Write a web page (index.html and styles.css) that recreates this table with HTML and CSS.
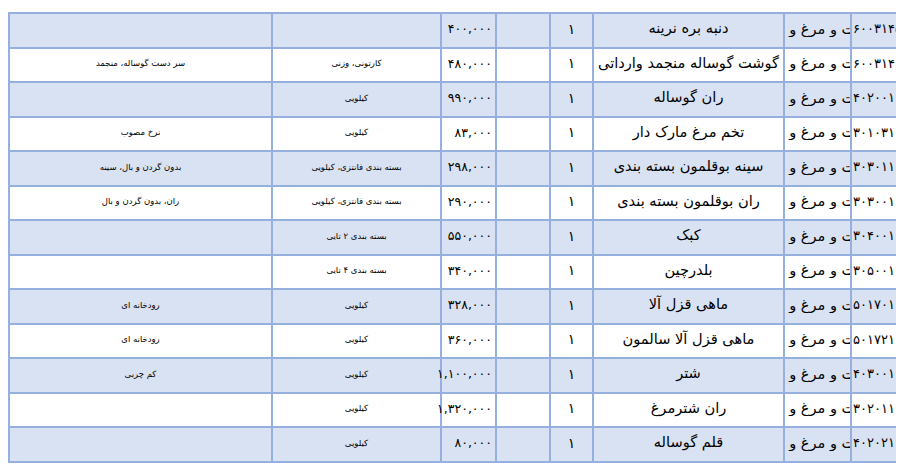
FILE: index.html
```html
<!DOCTYPE html>
<html lang="fa">
<head>
<meta charset="utf-8">
<link rel="stylesheet" href="styles.css">
</head>
<body>
<div class="wrap">
<table class="grid" dir="rtl">
<colgroup>
<col class="c-code"><col class="c-cat"><col class="c-name"><col class="c-qty"><col class="c-empty"><col class="c-price"><col class="c-pack"><col class="c-note">
</colgroup>
<tbody>
<tr class="band"><td class="code">۶۰۰۳۱۴۵</td><td class="cat"><div><span>گوشت و مرغ و ماهی</span></div></td><td class="name">دنبه بره نرینه</td><td class="qty">۱</td><td></td><td class="price">۴۰۰,۰۰۰</td><td class="small"></td><td class="small"></td></tr>
<tr><td class="code">۶۰۰۳۱۴۶</td><td class="cat"><div><span>گوشت و مرغ و ماهی</span></div></td><td class="name">گوشت گوساله منجمد وارداتی</td><td class="qty">۱</td><td></td><td class="price">۴۸۰,۰۰۰</td><td class="small">کارتونی، وزنی</td><td class="small">سر دست گوساله، منجمد</td></tr>
<tr class="band"><td class="code">۴۰۲۰۰۱</td><td class="cat"><div><span>گوشت و مرغ و ماهی</span></div></td><td class="name">ران گوساله</td><td class="qty">۱</td><td></td><td class="price">۹۹۰,۰۰۰</td><td class="small">کیلویی</td><td class="small"></td></tr>
<tr><td class="code">۳۰۱۰۳۱</td><td class="cat"><div><span>گوشت و مرغ و ماهی</span></div></td><td class="name">تخم مرغ مارک دار</td><td class="qty">۱</td><td></td><td class="price">۸۳,۰۰۰</td><td class="small">کیلویی</td><td class="small">نرخ مصوب</td></tr>
<tr class="band"><td class="code">۳۰۳۰۱۱</td><td class="cat"><div><span>گوشت و مرغ و ماهی</span></div></td><td class="name">سینه بوقلمون بسته بندی</td><td class="qty">۱</td><td></td><td class="price">۲۹۸,۰۰۰</td><td class="small">بسته بندی فانتزی، کیلویی</td><td class="small">بدون گردن و بال، سینه</td></tr>
<tr><td class="code">۳۰۳۰۰۱</td><td class="cat"><div><span>گوشت و مرغ و ماهی</span></div></td><td class="name">ران بوقلمون بسته بندی</td><td class="qty">۱</td><td></td><td class="price">۲۹۰,۰۰۰</td><td class="small">بسته بندی فانتزی، کیلویی</td><td class="small">ران، بدون گردن و بال</td></tr>
<tr class="band"><td class="code">۳۰۴۰۰۱</td><td class="cat"><div><span>گوشت و مرغ و ماهی</span></div></td><td class="name">کبک</td><td class="qty">۱</td><td></td><td class="price">۵۵۰,۰۰۰</td><td class="small">بسته بندی ۲ تایی</td><td class="small"></td></tr>
<tr><td class="code">۳۰۵۰۰۱</td><td class="cat"><div><span>گوشت و مرغ و ماهی</span></div></td><td class="name">بلدرچین</td><td class="qty">۱</td><td></td><td class="price">۳۴۰,۰۰۰</td><td class="small">بسته بندی ۴ تایی</td><td class="small"></td></tr>
<tr class="band"><td class="code">۵۰۱۷۰۱</td><td class="cat"><div><span>گوشت و مرغ و ماهی</span></div></td><td class="name">ماهی قزل آلا</td><td class="qty">۱</td><td></td><td class="price">۳۲۸,۰۰۰</td><td class="small">کیلویی</td><td class="small">رودخانه ای</td></tr>
<tr><td class="code">۵۰۱۷۲۱</td><td class="cat"><div><span>گوشت و مرغ و ماهی</span></div></td><td class="name">ماهی قزل آلا سالمون</td><td class="qty">۱</td><td></td><td class="price">۳۶۰,۰۰۰</td><td class="small">کیلویی</td><td class="small">رودخانه ای</td></tr>
<tr class="band"><td class="code">۴۰۳۰۰۱</td><td class="cat"><div><span>گوشت و مرغ و ماهی</span></div></td><td class="name">شتر</td><td class="qty">۱</td><td></td><td class="price">۱,۱۰۰,۰۰۰</td><td class="small">کیلویی</td><td class="small">کم چربی</td></tr>
<tr><td class="code">۳۰۲۰۱۱</td><td class="cat"><div><span>گوشت و مرغ و ماهی</span></div></td><td class="name">ران شترمرغ</td><td class="qty">۱</td><td></td><td class="price">۱,۳۲۰,۰۰۰</td><td class="small">کیلویی</td><td class="small"></td></tr>
<tr class="band"><td class="code">۴۰۲۰۲۱</td><td class="cat"><div><span>گوشت و مرغ و ماهی</span></div></td><td class="name">قلم گوساله</td><td class="qty">۱</td><td></td><td class="price">۸۰,۰۰۰</td><td class="small">کیلویی</td><td class="small"></td></tr>
</tbody>
</table>
</div>
</body>
</html>
```
FILE: styles.css
```css
html, body {
  margin: 0;
  padding: 0;
  background: #ffffff;
}
body {
  padding: 12px 10px 0 8px;
  font-family: "DejaVu Sans", "Noto Sans", sans-serif;
  color: #000000;
}
.wrap {
  width: 888px;
  overflow: hidden;
}
.grid {
  table-layout: fixed;
  border-collapse: separate;
  border-spacing: 0;
  width: 912px;
  border-top: 2px solid #95b0de;
}
.c-code { width: 70px; }
.c-cat { width: 67px; }
.c-name { width: 191px; }
.c-qty { width: 43px; }
.c-empty { width: 54px; }
.c-price { width: 55px; }
.c-pack { width: 169px; }
.c-note { width: 263px; }
.grid td {
  box-sizing: border-box;
  height: 34.5px;
  padding: 0 0 3px 0;
  border-left: 2px solid #95b0de;
  border-bottom: 2px solid #95b0de;
  vertical-align: middle;
  white-space: nowrap;
  background: #ffffff;
}
.grid tr.band td {
  background: #d9e2f3;
}
.grid td.code {
  text-align: left;
  font-size: 13px;
  padding-left: 1px;
  overflow: hidden;
}
.grid td.cat {
  overflow: hidden;
}
.cat div {
  display: flex;
  justify-content: center;
  overflow: hidden;
  font-size: 14.5px;
}
.cat span {
  flex: none;
}
.grid td.name {
  text-align: center;
  font-size: 14.6px;
  padding-bottom: 5px;
}
.grid td.qty {
  text-align: center;
  font-size: 14px;
}
.grid td.price {
  text-align: right;
  padding-right: 3px;
  font-size: 12.5px;
}
.grid td.small {
  text-align: center;
  font-size: 8.5px;
}
```
